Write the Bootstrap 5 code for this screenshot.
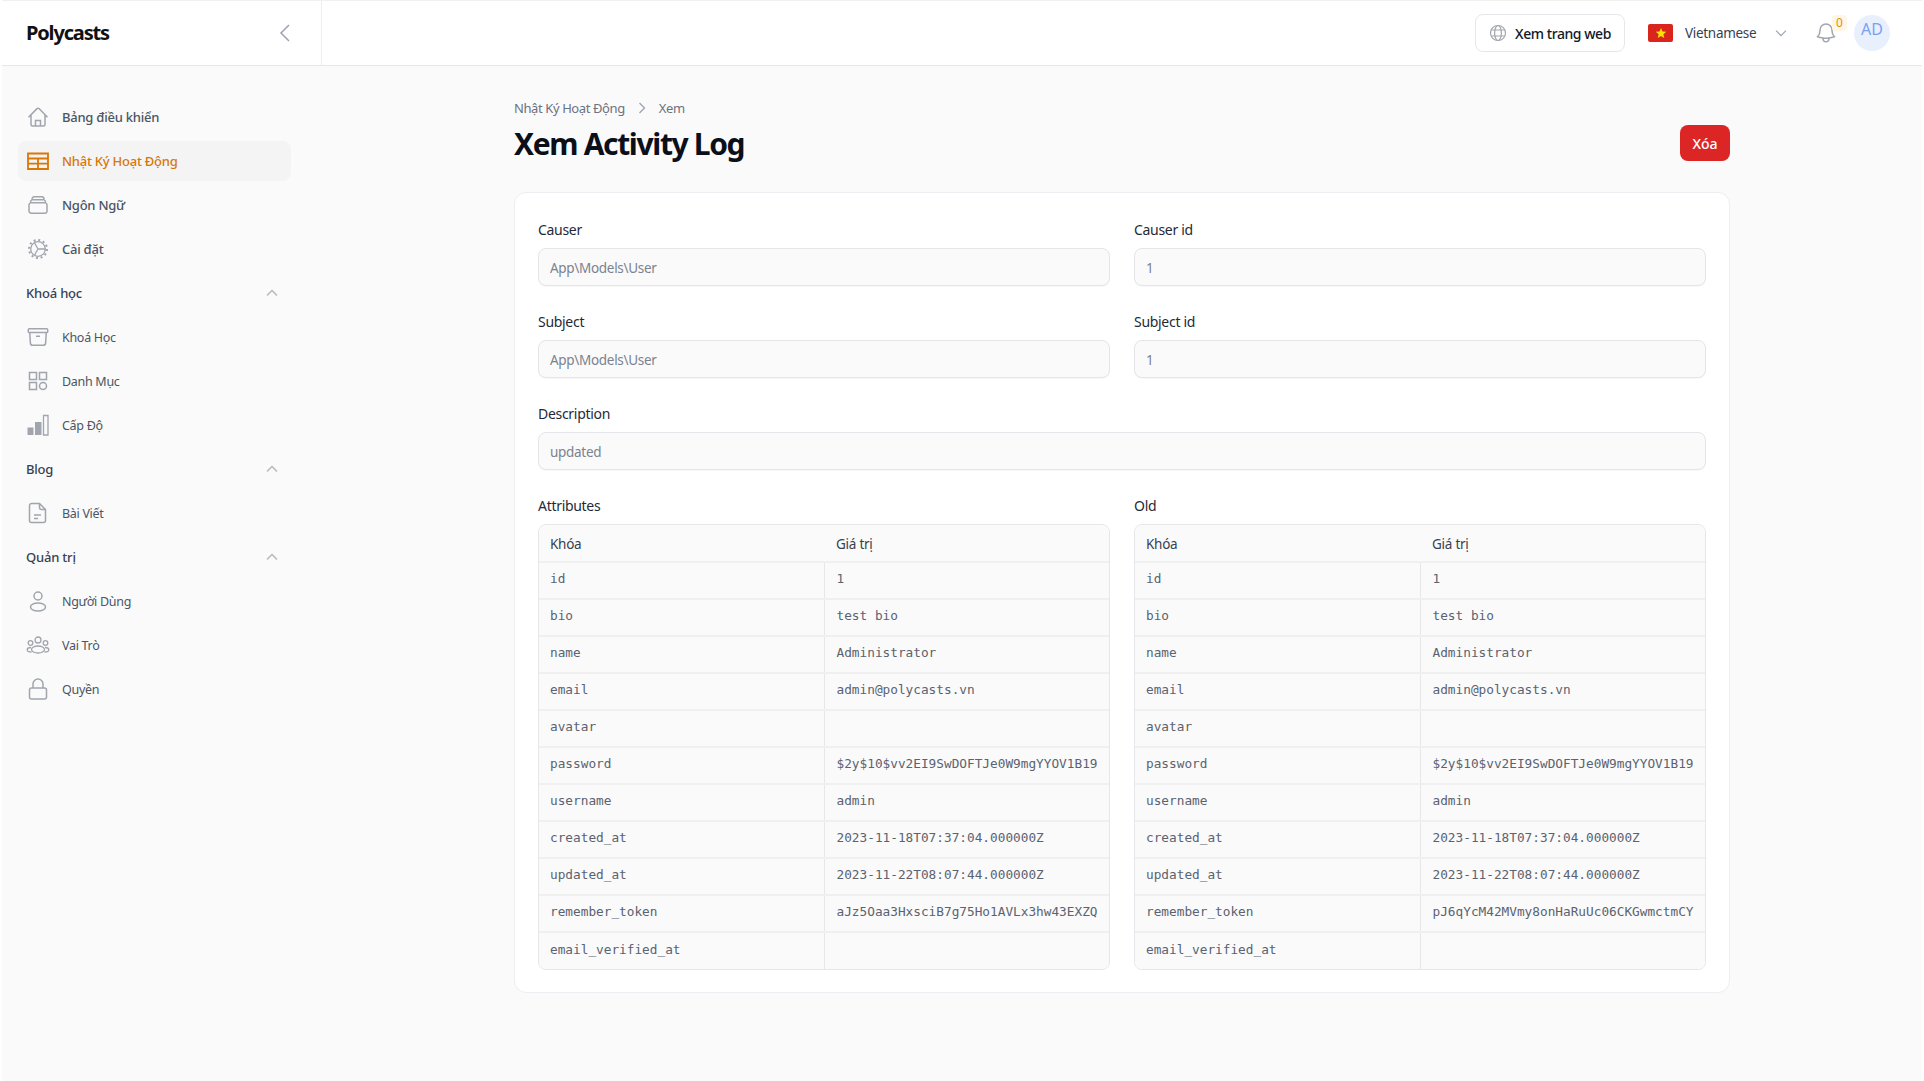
<!DOCTYPE html>
<html lang="vi">
<head>
  <meta charset="UTF-8">
  <title>Xem Activity Log - Polycasts</title>
  <meta name="viewport" content="width=device-width, initial-scale=1">
  <link href="https://cdn.jsdelivr.net/npm/bootstrap@5.3.2/dist/css/bootstrap.min.css" rel="stylesheet">
  <style>
    body { font-family: "Noto Sans", "Liberation Sans", sans-serif; background: #fff; color: #111827; font-size: 14px; padding: 0 2px; }
    svg { display: block; flex-shrink: 0; }
    .shell { min-height: 100vh; background: #fafafa; }
    .topbar { height: 66px; background: #fff; border-top: 1px solid #f0f0f1; border-bottom: 1px solid #e5e7eb; }
    .brand-box { width: 320px; padding: 0 29px 0 24px; border-right: 1px solid #eceef1; }
    .brand { font-size: 20px; font-weight: 700; letter-spacing: -1.15px; color: #111; }
    .view-site { height: 38px; width: 150px; border: 1px solid #e5e7eb; border-radius: 8px; background: #fff; font-weight: 500; font-size: 14px; letter-spacing: -.45px; color: #111827; }
    .lang { margin-left: 23px; width: 140px; color: #374151; font-size: 13.5px; letter-spacing: -.3px; }
    .lang-name { margin-left: 12px; }
    .flag { width: 25px; height: 18px; background: #da251d; border-radius: 2px; }
    .bell-box { margin-left: 26px; }
    .bell-count { top: -6px; right: -9px; width: 15px; height: 16px; font-size: 12px; line-height: 16px; color: #ea8a0c; background: #fff7e6; border-radius: 4px; text-align: center; }
    .avatar { width: 36px; height: 36px; margin: 0 32px 0 16px; border-radius: 50%; background: #e8f0fe; color: #7d9ff2; font-size: 16px; line-height: 28px; text-align: center; }
    .sidebar { width: 320px; padding: 31px 31px 0 16px; }
    .side-link { height: 40px; margin-bottom: 4px; padding: 0 8px; gap: 12px; border-radius: 8px; color: #4b5563; font-weight: 500; font-size: 13px; letter-spacing: -.24px; text-decoration: none; }
    .side-link span, .side-head span { padding-top: 2px; }
    .side-link svg { color: #a1a5ad; }
    .side-link.on { background: #f4f4f5; color: #d97706; }
    .side-link.on svg { color: #d97706; }
    .side-link.sub { font-weight: 400; font-size: 12.5px; letter-spacing: -.3px; }
    .side-head { height: 40px; margin-bottom: 4px; padding: 0 11px 0 8px; color: #374151; font-weight: 500; font-size: 13px; letter-spacing: -.2px; }
    .side-head svg { color: #b3b6bd; }
    .page-wrap { width: 1216px; margin: 0 auto; padding-top: 32px; }
    .crumbs { gap: 12px; margin: 0 0 7px; font-size: 13px; line-height: 20px; letter-spacing: -.4px; }
    .crumbs a, .crumbs span { color: #6b7280; text-decoration: none; }
    .page-title { font-size: 30px; font-weight: 700; letter-spacing: -1.35px; line-height: 34px; padding-top: 2px; margin: 0; color: #0b0f19; }
    .del-btn { width: 50px; height: 36px; padding: 0; border-radius: 8px; background: #dc2626; border: 0; font-size: 14px; font-weight: 500; }
    .log-card { margin-top: 31px; padding: 25px 23px 22px; background: #fff; border: 1px solid #eceef1; border-radius: 12px; }
    .field-label { margin-bottom: 8px; padding-top: 2px; line-height: 20px; font-weight: 400; font-size: 14px; letter-spacing: -.3px; color: #1f2937; }
    .field-input, .field-input:disabled { height: 38px; padding: 2px 11px 0; background: #fafafa; border: 1px solid #e3e5e8; border-radius: 8px; font-size: 13.5px; letter-spacing: -.3px; color: #7b8290; box-shadow: 0 1px 1px rgba(0,0,0,.03); }
    .kv-wrap { border: 1px solid #e5e7eb; border-radius: 8px; overflow: hidden; background: #fafafa; }
    .kv-table { margin: 0; table-layout: fixed; --bs-table-bg: #fafafa; }
    .kv-table th { height: 37px; padding: 2px 12px 0; font-weight: 400; font-size: 13.5px; letter-spacing: -.25px; color: #374151; border-bottom: 0; vertical-align: middle; }
    .kv-table td { height: 37px; padding: 0 12px 3px; vertical-align: middle; font-family: "DejaVu Sans Mono", "Liberation Mono", monospace; font-size: 12.75px; color: #5b6270; border-top: 2px solid #f0f0f1; border-bottom: 0; white-space: nowrap; }
    .kv-table th:first-child, .kv-table td:first-child { padding-left: 11px; }
    .kv-table td:first-child { border-right: 1px solid #e5e7eb; }
  </style>
</head>
<body>
<svg width="0" height="0" style="position:absolute">
  <symbol id="ic-home" viewBox="0 0 24 24"><path d="M2.500 12.200 11 3.600a1.400 1.400 0 0 1 2 0l8.500 8.600M5 10v9.500A1.500 1.500 0 0 0 6.500 21h11a1.500 1.500 0 0 0 1.500-1.500V10M9.500 21v-5.500h5V21"/></symbol>
  <symbol id="ic-table" viewBox="0 0 24 24"><path d="M2 4.500h20v15.500H2zM2 9.500h20M2 14.700h20M12 9.500V20"/></symbol>
  <symbol id="ic-stack" viewBox="0 0 24 24"><path d="M6 6.878V6a2.250 2.250 0 0 1 2.250-2.250h7.500A2.250 2.250 0 0 1 18 6v.878m-12 0c.235-.083.487-.128.750-.128h10.500c.263 0 .515.045.750.128m-12 0A2.250 2.250 0 0 0 4.500 9v.878m13.500-3A2.250 2.250 0 0 1 19.500 9v.878m0 0a2.246 2.246 0 0 0-.750-.128H5.250c-.263 0-.515.045-.750.128m15 0A2.250 2.250 0 0 1 21 12v6a2.250 2.250 0 0 1-2.250 2.250H5.250A2.250 2.250 0 0 1 3 18v-6c0-.980.626-1.813 1.500-2.122"/></symbol>
  <symbol id="ic-cog" viewBox="0 0 24 24"><circle cx="12" cy="12" r="7.300"/><circle cx="12" cy="12" r="9" stroke-width="2" stroke-dasharray="2 2.710"/><path d="M12 12 8.500 5.700M12 12l7.300 0M12 12l-3.500 6.300"/></symbol>
  <symbol id="ic-box" viewBox="0 0 24 24"><path d="M20.250 7.500l-.625 10.632a2.250 2.250 0 0 1-2.247 2.118H6.622a2.250 2.250 0 0 1-2.247-2.118L3.750 7.500M10 11.250h4M3.375 7.500h17.250c.621 0 1.125-.504 1.125-1.125v-1.500c0-.621-.504-1.125-1.125-1.125H3.375c-.621 0-1.125.504-1.125 1.125v1.500c0 .621.504 1.125 1.125 1.125z"/></symbol>
  <symbol id="ic-grid" viewBox="0 0 24 24"><path d="M3.500 3.500h7v7h-7zM13.500 3.500h7v7h-7zM3.500 13.500h7v7h-7z"/><circle cx="17" cy="17" r="3.500"/></symbol>
  <symbol id="ic-bars" viewBox="0 0 24 24"><path d="M1.500 14.500h6v7.500h-6zM9 9h6.500v13H9z" fill="currentColor" stroke="none"/><path d="M17.500 2.500h4.500v19.500h-4.500z"/></symbol>
  <symbol id="ic-doc" viewBox="0 0 24 24"><path d="M5.500 2.500h8l6 6v11a2 2 0 0 1-2 2h-12a2 2 0 0 1-2-2v-15a2 2 0 0 1 2-2zM13.500 2.500v4a2 2 0 0 0 2 2h4M8 14h7M8 17.500h4"/></symbol>
  <symbol id="ic-user" viewBox="0 0 24 24"><circle cx="12" cy="7" r="4"/><ellipse cx="12" cy="18" rx="7.500" ry="4"/></symbol>
  <symbol id="ic-group" viewBox="0 0 24 24"><circle cx="12" cy="7" r="3"/><circle cx="4.500" cy="10" r="2.300"/><circle cx="19.500" cy="10" r="2.300"/><ellipse cx="12" cy="16.500" rx="6.500" ry="3.500"/><path d="M5 14.500c-2.500 0-3.800 1-3.800 2.200S2.500 19 5.500 19M19 14.500c2.500 0 3.800 1 3.800 2.200S21.500 19 18.500 19"/></symbol>
  <symbol id="ic-lock" viewBox="0 0 24 24"><path d="M7 11V7a5 5 0 0 1 10 0v4"/><rect x="3.500" y="11" width="17" height="11" rx="2"/></symbol>
  <symbol id="ic-up" viewBox="0 0 24 24"><path d="M4.500 15.700 12 8.300l7.500 7.400"/></symbol>
</svg>

<div class="shell">
  <header class="topbar d-flex align-items-center">
    <div class="brand-box h-100 d-flex align-items-center justify-content-between">
      <span class="brand">Polycasts</span>
      <svg width="14" height="20" viewBox="0 0 14 20" fill="none" stroke="#9ca3af" stroke-width="1.500"><path d="M11 2 3 10l8 8"/></svg>
    </div>
    <div class="ms-auto d-flex align-items-center">
      <a class="view-site d-flex align-items-center justify-content-center gap-2 text-decoration-none" href="#">
        <svg width="18" height="18" viewBox="0 0 24 24" fill="none" stroke="#a1a5ad" stroke-width="1.600"><circle cx="12" cy="12" r="10"/><ellipse cx="12" cy="12" rx="4.500" ry="10"/><path d="M3 8h18M3 16h18"/></svg>
        Xem trang web
      </a>
      <div class="lang d-flex align-items-center">
        <span class="flag d-flex align-items-center justify-content-center">
          <svg width="12" height="12" viewBox="0 0 24 24"><polygon fill="#ffe500" points="12,2 14.900,9 22.500,9.600 16.700,14.500 18.500,22 12,18 5.500,22 7.300,14.500 1.500,9.600 9.100,9"/></svg>
        </span>
        <span class="lang-name me-auto">Vietnamese</span>
        <svg width="14" height="14" viewBox="0 0 24 24" fill="none" stroke="#9ca3af" stroke-width="2"><path d="M3.500 8 12 16.500 20.500 8"/></svg>
      </div>
      <div class="bell-box position-relative">
        <svg width="24" height="24" viewBox="0 0 24 24" fill="none" stroke="#a1a5ad" stroke-width="1.500"><path d="M14.900 17.100a23.800 23.800 0 0 0 5.500-1.300A9 9 0 0 1 18 9.700V9a6 6 0 0 0-12 0v.700a9 9 0 0 1-2.400 6.100 24 24 0 0 0 5.500 1.300m5.800 0a24.300 24.300 0 0 1-5.800 0m5.800 0a3 3 0 1 1-5.800 0"/></svg>
        <span class="bell-count position-absolute">0</span>
      </div>
      <div class="avatar">AD</div>
    </div>
  </header>

  <div class="d-flex">
    <aside class="sidebar">
      <nav class="d-flex flex-column">
        <a href="#" class="side-link d-flex align-items-center"><svg width="24" height="24" fill="none" stroke="currentColor" stroke-width="1.500"><use href="#ic-home"/></svg><span>Bảng điều khiển</span></a>
        <a href="#" class="side-link on d-flex align-items-center"><svg width="24" height="24" fill="none" stroke="currentColor" stroke-width="1.800"><use href="#ic-table"/></svg><span>Nhật Ký Hoạt Động</span></a>
        <a href="#" class="side-link d-flex align-items-center"><svg width="24" height="24" fill="none" stroke="currentColor" stroke-width="1.500"><use href="#ic-stack"/></svg><span>Ngôn Ngữ</span></a>
        <a href="#" class="side-link d-flex align-items-center"><svg width="24" height="24" fill="none" stroke="currentColor" stroke-width="1.300"><use href="#ic-cog"/></svg><span>Cài đặt</span></a>
        <div class="side-head d-flex align-items-center justify-content-between"><span>Khoá học</span><svg width="16" height="16" fill="none" stroke="currentColor" stroke-width="2" viewBox="0 0 24 24"><use href="#ic-up"/></svg></div>
        <a href="#" class="side-link sub d-flex align-items-center"><svg width="24" height="24" fill="none" stroke="currentColor" stroke-width="1.500"><use href="#ic-box"/></svg><span>Khoá Học</span></a>
        <a href="#" class="side-link sub d-flex align-items-center"><svg width="24" height="24" fill="none" stroke="currentColor" stroke-width="1.500"><use href="#ic-grid"/></svg><span>Danh Mục</span></a>
        <a href="#" class="side-link sub d-flex align-items-center"><svg width="24" height="24" fill="none" stroke="currentColor" stroke-width="1.300"><use href="#ic-bars"/></svg><span>Cấp Độ</span></a>
        <div class="side-head d-flex align-items-center justify-content-between"><span>Blog</span><svg width="16" height="16" fill="none" stroke="currentColor" stroke-width="2" viewBox="0 0 24 24"><use href="#ic-up"/></svg></div>
        <a href="#" class="side-link sub d-flex align-items-center"><svg width="24" height="24" fill="none" stroke="currentColor" stroke-width="1.500"><use href="#ic-doc"/></svg><span>Bài Viết</span></a>
        <div class="side-head d-flex align-items-center justify-content-between"><span>Quản trị</span><svg width="16" height="16" fill="none" stroke="currentColor" stroke-width="2" viewBox="0 0 24 24"><use href="#ic-up"/></svg></div>
        <a href="#" class="side-link sub d-flex align-items-center"><svg width="24" height="24" fill="none" stroke="currentColor" stroke-width="1.500"><use href="#ic-user"/></svg><span>Người Dùng</span></a>
        <a href="#" class="side-link sub d-flex align-items-center"><svg width="24" height="24" fill="none" stroke="currentColor" stroke-width="1.300"><use href="#ic-group"/></svg><span>Vai Trò</span></a>
        <a href="#" class="side-link sub d-flex align-items-center"><svg width="24" height="24" fill="none" stroke="currentColor" stroke-width="1.500"><use href="#ic-lock"/></svg><span>Quyền</span></a>
      </nav>
    </aside>

    <main class="flex-grow-1">
      <div class="page-wrap">
        <div class="d-flex align-items-end justify-content-between">
          <div>
            <nav class="crumbs d-flex align-items-center">
              <a href="#">Nhật Ký Hoạt Động</a>
              <svg width="10" height="12" viewBox="0 0 10 12" fill="none" stroke="#9ca3af" stroke-width="1.300"><path d="M2.500 1 7.500 6l-5 5"/></svg>
              <span>Xem</span>
            </nav>
            <h1 class="page-title">Xem Activity Log</h1>
          </div>
          <button class="btn btn-danger del-btn">Xóa</button>
        </div>

        <div class="log-card">
          <div class="row g-4" id="fields"></div>
        </div>
      </div>
    </main>
  </div>
</div>

<script>
  const attrs = [
    ["id", "1", "1"],
    ["bio", "test bio", "test bio"],
    ["name", "Administrator", "Administrator"],
    ["email", "admin@polycasts.vn", "admin@polycasts.vn"],
    ["avatar", "", ""],
    ["password", "$2y$10$vv2EI9SwDOFTJe0W9mgYYOV1B19", "$2y$10$vv2EI9SwDOFTJe0W9mgYYOV1B19"],
    ["username", "admin", "admin"],
    ["created_at", "2023-11-18T07:37:04.000000Z", "2023-11-18T07:37:04.000000Z"],
    ["updated_at", "2023-11-22T08:07:44.000000Z", "2023-11-22T08:07:44.000000Z"],
    ["remember_token", "aJz5Oaa3HxsciB7g75Ho1AVLx3hw43EXZQ", "pJ6qYcM42MVmy8onHaRuUc06CKGwmctmCY"],
    ["email_verified_at", "", ""]
  ];

  function field(label, value, col) {
    return `<div class="${col}">
      <label class="form-label field-label d-block">${label}</label>
      <input class="form-control field-input" disabled value="${value}">
    </div>`;
  }

  function kvTable(label, idx) {
    const rows = attrs.map(a => `<tr><td>${a[0]}</td><td>${a[idx]}</td></tr>`).join("");
    return `<div class="col-6">
      <div class="field-label">${label}</div>
      <div class="kv-wrap">
        <table class="table kv-table">
          <thead><tr><th>Khóa</th><th>Giá trị</th></tr></thead>
          <tbody>${rows}</tbody>
        </table>
      </div>
    </div>`;
  }

  document.getElementById("fields").innerHTML =
    field("Causer", "App\\Models\\User", "col-6") +
    field("Causer id", "1", "col-6") +
    field("Subject", "App\\Models\\User", "col-6") +
    field("Subject id", "1", "col-6") +
    field("Description", "updated", "col-12") +
    kvTable("Attributes", 1) +
    kvTable("Old", 2);
</script>
<script src="https://cdn.jsdelivr.net/npm/bootstrap@5.3.2/dist/js/bootstrap.bundle.min.js"></script>
</body>
</html>
